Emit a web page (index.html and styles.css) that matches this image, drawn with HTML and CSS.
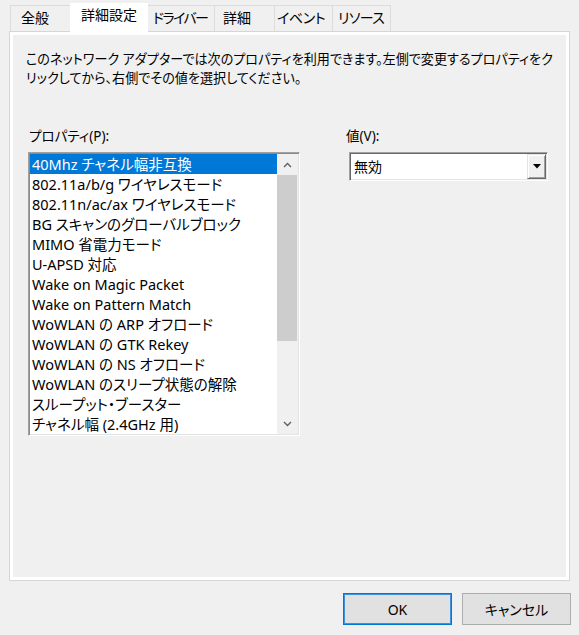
FILE: index.html
```html
<!DOCTYPE html>
<html lang="ja">
<head>
<meta charset="utf-8">
<title>詳細設定</title>
<link rel="stylesheet" href="styles.css">
</head>
<body>
<div class="dialog">
  <div class="tabs">
    <div class="tab t-general">全般</div>
    <div class="tab t-advanced active">詳細設定</div>
    <div class="tab t-driver">ドライバー</div>
    <div class="tab t-details">詳細</div>
    <div class="tab t-events">イベント</div>
    <div class="tab t-resources">リソース</div>
  </div>
  <div class="panel">
    <p class="desc">このネットワーク アダプターでは次のプロパティを利用できます。左側で変更するプロパティをク<br>リックしてから、右側でその値を選択してください。</p>
    <div class="fields">
      <div class="field field-left">
        <div class="label">プロパティ(P):</div>
        <div class="listbox">
          <ul class="items">
            <li class="item selected">40Mhz チャネル幅非互換</li>
            <li class="item">802.11a/b/g ワイヤレスモード</li>
            <li class="item">802.11n/ac/ax ワイヤレスモード</li>
            <li class="item">BG スキャンのグローバルブロック</li>
            <li class="item">MIMO 省電力モード</li>
            <li class="item">U-APSD 対応</li>
            <li class="item">Wake on Magic Packet</li>
            <li class="item">Wake on Pattern Match</li>
            <li class="item">WoWLAN の ARP オフロード</li>
            <li class="item">WoWLAN の GTK Rekey</li>
            <li class="item">WoWLAN の NS オフロード</li>
            <li class="item">WoWLAN のスリープ状態の解除</li>
            <li class="item">スループット・ブースター</li>
            <li class="item">チャネル幅 (2.4GHz 用)</li>
          </ul>
          <div class="scrollbar">
            <div class="sb-btn">
              <svg width="9" height="6" viewBox="0 0 9 6"><polyline points="1,5 4.5,1.5 8,5" fill="none" stroke="#606060" stroke-width="1.4"/></svg>
            </div>
            <div class="sb-track"><div class="sb-thumb"></div></div>
            <div class="sb-btn">
              <svg width="9" height="6" viewBox="0 0 9 6"><polyline points="1,1 4.5,4.5 8,1" fill="none" stroke="#606060" stroke-width="1.4"/></svg>
            </div>
          </div>
        </div>
      </div>
      <div class="field field-right">
        <div class="label">値(V):</div>
        <div class="combo">
          <span class="combo-value">無効</span>
          <span class="combo-btn">
            <svg width="8" height="5" viewBox="0 0 8 5"><polygon points="0,0 8,0 4,4.5" fill="#000"/></svg>
          </span>
        </div>
      </div>
    </div>
  </div>
  <div class="buttons">
    <button class="btn btn-default">OK</button>
    <button class="btn">キャンセル</button>
  </div>
</div>
</body>
</html>
```
FILE: styles.css
```css
* {
  box-sizing: border-box;
}

html, body {
  margin: 0;
  padding: 0;
  background: #f0f0f0;
}

body {
  font-family: "Noto Sans", "Noto Sans CJK JP", sans-serif;
  font-feature-settings: "palt";
  color: #000;
  width: 579px;
  height: 635px;
  overflow: hidden;
}

/* ---------- tabs ---------- */
.tabs {
  display: flex;
  padding: 5px 0 0 10px;
  height: 31px;
}

.tab {
  height: 26px;
  line-height: 24px;
  font-size: 14px;
  border: 1px solid #dcdcdc;
  border-bottom: none;
  margin-right: -1px;
  background: #f0f0f0;
  white-space: nowrap;
  color: #000;
}

.tab.active {
  position: relative;
  z-index: 1;
  margin-top: -2px;
  height: 29px;
  line-height: 22px;
  background: #fff;
  border-color: #fff;
}

.t-general { width: 61px; padding-left: 10px; }
.t-advanced { width: 78px; padding-left: 10px; }
.t-driver { width: 68px; padding-left: 5px; letter-spacing: -1.6px; }
.t-details { width: 61px; padding-left: 8px; }
.t-events { width: 59px; padding-left: 2px; letter-spacing: -0.4px; }
.t-resources { width: 59px; padding-left: 5px; letter-spacing: -0.6px; }

/* ---------- panel ---------- */
.panel {
  margin: 0 9px;
  height: 550px;
  border: 1px solid #d6d6d6;
  box-shadow: inset 0 0 0 3px #fff;
  padding: 18px 17px 0 16px;
}

.desc {
  margin: 0;
  font-size: 13.1px;
  line-height: 19px;
  white-space: nowrap;
}

.fields {
  display: grid;
  grid-template-columns: 275px 204px;
  column-gap: 43px;
  margin-top: 38px;
}

.label {
  font-size: 13.5px;
  line-height: 20px;
  height: 20px;
}

.field-left .label {
  padding-left: 3px;
}

.field-right .label {
  padding-left: 2px;
}

/* ---------- listbox ---------- */
.listbox {
  margin-top: 6px;
  margin-left: 2px;
  width: 272px;
  height: 284px;
  display: flex;
  background: #fff;
  border-top: 1px solid #a0a0a0;
  border-left: 1px solid #a0a0a0;
  border-right: 1px solid #fff;
  border-bottom: 1px solid #fff;
  box-shadow: inset 1px 1px 0 #8a8a8a, inset -1px -1px 0 #e3e3e3;
  padding: 1px;
}

.items {
  list-style: none;
  margin: 0;
  padding: 0;
  width: 247px;
  flex: none;
}

.item {
  height: 20px;
  line-height: 20px;
  font-size: 14.5px;
  padding-left: 2px;
  white-space: nowrap;
  overflow: hidden;
}

.item.selected {
  background: #0078d7;
  color: #fff;
}

.scrollbar {
  width: 21px;
  flex: none;
  display: flex;
  flex-direction: column;
  background: #f0f0f0;
}

.sb-btn {
  height: 21px;
  flex: none;
  display: flex;
  align-items: center;
  justify-content: center;
}

.sb-btn svg {
  display: block;
}

.sb-track {
  flex: 1;
}

.sb-thumb {
  height: 166px;
  background: #cdcdcd;
  margin-right: 1px;
}

/* ---------- combo ---------- */
.combo {
  margin-top: 6px;
  margin-left: 5px;
  width: 199px;
  height: 29px;
  display: flex;
  align-items: stretch;
  background: #fff;
  border-top: 1px solid #a0a0a0;
  border-left: 1px solid #a0a0a0;
  border-right: 1px solid #fff;
  border-bottom: 1px solid #fff;
  box-shadow: inset 1px 1px 0 #696969, inset -1px -1px 0 #e3e3e3;
  padding: 1px;
}

.combo-value {
  flex: 1;
  font-size: 14px;
  line-height: 25px;
  padding-left: 3px;
}

.combo-btn {
  width: 19px;
  flex: none;
  display: flex;
  align-items: center;
  justify-content: center;
  background: #f0f0f0;
  border-top: 1px solid #e3e3e3;
  border-left: 1px solid #e3e3e3;
  border-right: 1px solid #696969;
  border-bottom: 1px solid #696969;
  box-shadow: inset 1px 1px 0 #fff, inset -1px -1px 0 #a0a0a0;
}

.combo-btn svg {
  display: block;
}

/* ---------- buttons ---------- */
.buttons {
  display: flex;
  justify-content: flex-end;
  gap: 10px;
  padding: 12px 8px 0 0;
}

.btn {
  width: 109px;
  height: 32px;
  font-family: "Noto Sans", "Noto Sans CJK JP", sans-serif;
  font-feature-settings: "palt";
  font-size: 14px;
  color: #000;
  background: #e1e1e1;
  border: 1px solid #adadad;
  padding: 0;
  margin: 0;
}

.btn-default {
  border: 1px solid #0078d7;
  box-shadow: inset 0 0 0 1px #3c93db;
}
```
